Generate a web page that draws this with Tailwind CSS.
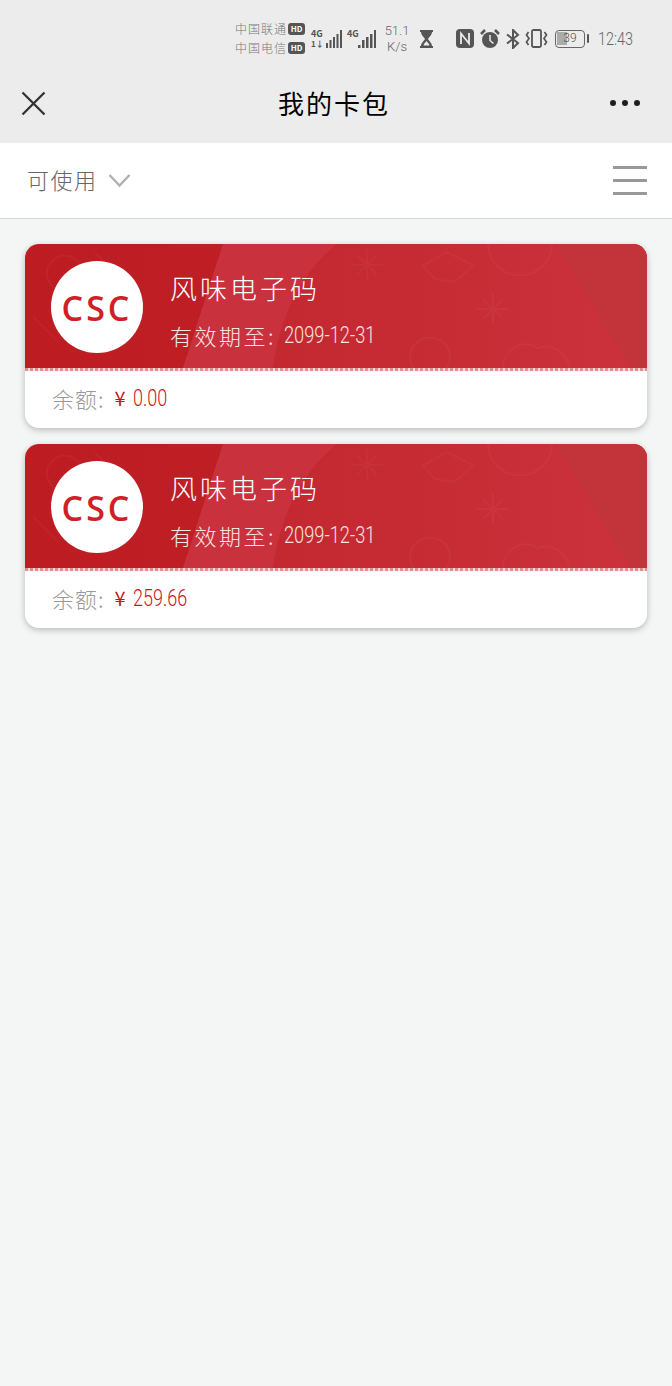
<!DOCTYPE html>
<html lang="zh-CN">
<head>
    <meta charset="UTF-8">
    <meta name="viewport" content="width=device-width, initial-scale=1.0">
    <title>我的卡包</title>
    <script src="https://cdn.jsdelivr.net/npm/@tailwindcss/browser@4"></script>
</head>
<body class="bg-[#f4f6f5] font-['Noto_Sans_CJK_SC','Noto_Sans',sans-serif] h-[1386px] overflow-hidden">
    <!-- shared card artwork -->
    <svg class="absolute w-0 h-0">
        <defs>
            <linearGradient id="left-red" x1="0" x2="1" y1="0" y2="0">
                <stop offset="0" stop-color="#bd1d22"/>
                <stop offset="1" stop-color="#c2242a"/>
            </linearGradient>
            <linearGradient id="mid-red" x1="0" x2="1" y1="0" y2="0">
                <stop offset="0" stop-color="#c2252c"/>
                <stop offset="1" stop-color="#cb323c"/>
            </linearGradient>
        </defs>
        <symbol id="card-art" viewBox="0 0 622 126" preserveAspectRatio="none">
            <rect width="622" height="126" fill="url(#left-red)"/>
            <path d="M198 0H622V126H158Z" fill="url(#mid-red)"/>
            <path d="M198 0H312C275 30 255 75 248 126H158Z" fill="#c9313c"/>
            <path d="M532 0H622V126H605Z" fill="#c3343a"/>
            <g fill="none" stroke="#ffffff" stroke-opacity=".03" stroke-width="2">
                <circle cx="495" cy="0" r="32"/>
                <path d="M458 56l20 20M478 56l-20 20M468 50v32M452 66h32"/>
                <path d="M332 11l20 20M352 11l-20 20M342 5v32M326 21h32"/>
                <path d="M398 22l24-14 26 14-18 16-20-2z"/>
                <circle cx="405" cy="115" r="20"/>
                <path d="M478 126c0-22 24-30 34-20 14-6 30 4 33 20"/>
                <circle cx="40" cy="30" r="18"/>
                <path d="M70 10l30 24-26 30M8 74l24 24"/>
            </g>
        </symbol>
        <symbol id="signal-a" viewBox="0 0 16 18">
            <rect x="0" y="13" width="2" height="5" fill="currentColor"/>
            <rect x="3.500" y="10" width="2" height="8" fill="currentColor"/>
            <rect x="7" y="7" width="2" height="11" fill="currentColor"/>
            <rect x="10.500" y="4" width="2" height="14" fill="currentColor"/>
            <rect x="14" y="0" width="2" height="18" fill="currentColor"/>
        </symbol>
        <symbol id="signal-b" viewBox="0 0 18 18">
            <rect x="0" y="15" width="2.500" height="3" fill="currentColor"/>
            <rect x="4" y="10" width="2.500" height="8" fill="currentColor"/>
            <rect x="8" y="7" width="2.500" height="11" fill="currentColor"/>
            <rect x="12" y="4" width="2.500" height="14" fill="currentColor"/>
            <rect x="16" y="0" width="2" height="18" fill="currentColor"/>
        </symbol>
    </svg>

    <!-- Status bar + title bar -->
    <header class="bg-[#ececec] h-[143px] flex flex-col">
        <div class="h-[72px] flex items-center pl-[235px] pt-[5px] text-[#777777]">
            <div class="flex flex-col gap-[1px] w-[72px] text-[12px] leading-[18px] tracking-[1px] font-light">
                <div class="flex items-center whitespace-nowrap">中国联通<span class="ml-[1px] w-[17px] h-[12px] rounded-[3px] bg-[#555555] text-white text-[8px] leading-[12px] font-bold text-center tracking-normal">HD</span></div>
                <div class="flex items-center whitespace-nowrap">中国电信<span class="ml-[1px] w-[17px] h-[12px] rounded-[3px] bg-[#555555] text-white text-[8px] leading-[12px] font-bold text-center tracking-normal">HD</span></div>
            </div>
            <div class="relative w-[36px] h-[20px] ml-[4px] text-[#555555]">
                <span class="absolute left-0 top-[0px] text-[9px] leading-[10px] font-bold">4G</span>
                <span class="absolute left-0 top-[11px] text-[8px] leading-[8px] font-bold">1↓</span>
                <svg class="absolute left-[15px] top-[1px] w-[16px] h-[18px]"><use href="#signal-a"/></svg>
            </div>
            <div class="relative w-[36px] h-[20px] text-[#555555]">
                <span class="absolute left-0 top-[0px] text-[9px] leading-[10px] font-bold">4G</span>
                <svg class="absolute left-[11px] top-[1px] w-[18px] h-[18px]"><use href="#signal-b"/></svg>
            </div>
            <div class="w-[26px] text-center font-['Roboto',sans-serif] font-light text-[13px] leading-[16px] text-[#666666] ml-[1px]">51.1<br>K/s</div>
            <svg class="ml-[9px] w-[15px] h-[20px] text-[#555555]" viewBox="0 0 15 20" fill="currentColor">
                <path d="M1 1h13v2h-1c0 3-3 5-4 7 1 2 4 4 4 7h1v2H1v-2h1c0-3 3-5 4-7C5 8 2 6 2 3H1z"/>
                <path d="M7.500 12c-1 1.200-2.500 2.500-3 4.500h6c-.5-2-2-3.300-3-4.500z" fill="#ececec"/>
            </svg>
            <!-- NFC -->
            <svg class="ml-[22px] w-[18px] h-[19px] text-[#555555]" viewBox="0 0 18 19">
                <path d="M4 0h10a4 4 0 0 1 4 4v11a4 4 0 0 1-4 4H4a4 4 0 0 1-4-4V4a4 4 0 0 1 4-4z" fill="currentColor"/>
                <path d="M5 15V4.500L13 14.500V4" stroke="#ececec" stroke-width="1.800" fill="none"/>
            </svg>
            <!-- Alarm -->
            <svg class="ml-[6px] w-[20px] h-[20px] text-[#555555]" viewBox="0 0 20 20">
                <circle cx="10" cy="11" r="8" fill="currentColor"/>
                <path d="M1 5l4-4M19 5l-4-4" stroke="currentColor" stroke-width="2.500"/>
                <path d="M10 6v5.500l3.500 3" stroke="#ececec" stroke-width="1.500" fill="none"/>
            </svg>
            <!-- Bluetooth -->
            <svg class="ml-[5px] w-[16px] h-[20px] text-[#555555]" viewBox="0 0 16 20" fill="none" stroke="currentColor" stroke-width="2">
                <path d="M2 5.500L13 14 8 19V1l5 5L2 14.500"/>
            </svg>
            <!-- Vibrate -->
            <svg class="ml-[4px] w-[23px] h-[19px] text-[#555555]" viewBox="0 0 23 19" fill="none" stroke="currentColor" stroke-width="1.700">
                <rect x="7" y="1" width="9" height="17" rx="1.500" stroke-width="1.800"/>
                <path d="M3.500 3L1.500 6 4 9.500 1.500 13 3.500 16M19.500 3l2 3-2.500 3.500 2.500 3.500-2 3"/>
            </svg>
            <!-- Battery -->
            <div class="ml-[7px] relative w-[30px] h-[18px] rounded-[4px] border-[1.500px] border-[#666666] overflow-hidden">
                <div class="mt-[1px] ml-[1px] w-[10px] h-[13px] bg-[#ababab]"></div>
                <span class="absolute inset-0 text-center text-[12px] leading-[15px] font-['Roboto',sans-serif] font-light text-[#555555]">39</span>
            </div>
            <div class="ml-[2px] w-[2px] h-[9px] bg-[#555555] rounded-[1px]"></div>
            <span class="ml-[9px] font-['Roboto',sans-serif] font-light text-[18px] leading-[20px] text-[#666666] inline-block origin-left scale-x-[0.8] whitespace-nowrap">12:43</span>
        </div>
        <div class="relative h-[71px] flex items-center justify-between">
            <svg class="ml-[21px] mb-[8px] w-[25px] h-[25px]" viewBox="0 0 25 25" fill="none" stroke="#333333" stroke-width="2.300">
                <path d="M1.500 1.500L23.500 23.500M23.500 1.500L1.500 23.500"/>
            </svg>
            <h1 class="absolute left-[278px] top-[11px] text-[26px] leading-[40px] font-normal text-black tracking-[2px] whitespace-nowrap">我的卡包</h1>
            <div class="mr-[32px] mb-[9px] flex gap-[6px]">
                <span class="w-[6px] h-[6px] rounded-full bg-[#1f1f1f]"></span>
                <span class="w-[6px] h-[6px] rounded-full bg-[#1f1f1f]"></span>
                <span class="w-[6px] h-[6px] rounded-full bg-[#1f1f1f]"></span>
            </div>
        </div>
    </header>

    <!-- Filter bar -->
    <div class="h-[76px] bg-white border-b border-[#d6d6d6] flex items-center justify-between pl-[27px] pr-[25px]">
        <div class="flex items-center mb-[3px]">
            <span class="text-[22px] leading-[34px] font-light text-[#666666] tracking-[1.500px]">可使用</span>
            <svg class="ml-[10px] mt-[3px] w-[23px] h-[15px]" viewBox="0 0 23 15" fill="none" stroke="#b0b0b0" stroke-width="2.400">
                <path d="M1.500 2L11.500 12.500L21.500 2"/>
            </svg>
        </div>
        <div class="flex flex-col gap-[10.500px]">
            <div class="w-[34px] h-[2.500px] bg-[#999999]"></div>
            <div class="w-[34px] h-[2.500px] bg-[#999999]"></div>
            <div class="w-[34px] h-[2.500px] bg-[#999999]"></div>
        </div>
    </div>

    <!-- Cards -->
    <main class="pt-[25px] px-[25px] flex flex-col gap-[16px]">
        <div class="w-[622px] h-[184px] rounded-[14px] bg-white shadow-[0_2px_6px_rgba(0,0,0,0.25)] overflow-hidden">
            <div class="relative h-[124px]">
                <svg class="absolute inset-0 w-full h-full"><use href="#card-art"/></svg>
                <div class="relative h-full flex">
                    <div class="ml-[26px] mt-[17px] w-[92px] h-[92px] rounded-full bg-white flex items-center justify-center pt-[3px] text-[34px] font-['Open_Sans',sans-serif] font-semibold text-[#cf2027] tracking-[3px]">CSC</div>
                    <div class="ml-[27px] text-white">
                        <div class="mt-[23px] text-[27px] leading-[42px] font-light tracking-[3px] whitespace-nowrap">风味电子码</div>
                        <div class="mt-[9px] flex items-center h-[34px] text-[#f9e3e3] whitespace-nowrap">
                            <span class="text-[22px] font-light tracking-[2.500px]">有效期至:</span>
                            <span class="ml-[8px] font-['Roboto',sans-serif] font-light text-[24px] inline-block origin-left scale-x-[0.76]">2099-12-31</span>
                        </div>
                    </div>
                </div>
            </div>
            <div class="h-[3px] bg-[repeating-linear-gradient(90deg,#e58a8e_0,#e58a8e_3px,#f9dcdc_3px,#f9dcdc_5px)]"></div>
            <div class="h-[54px] pl-[27px] flex items-center whitespace-nowrap">
                <span class="text-[22px] font-light text-[#999999] tracking-[1px]">余额:</span>
                <span class="ml-[10px] text-[#c8161d] text-[20px] font-normal">¥</span>
                <span class="ml-[7px] font-['Roboto',sans-serif] font-light text-[#c8161d] text-[24px] inline-block origin-left scale-x-[0.75]">0.00</span>
            </div>
        </div>
        <div class="w-[622px] h-[184px] rounded-[14px] bg-white shadow-[0_2px_6px_rgba(0,0,0,0.25)] overflow-hidden">
            <div class="relative h-[124px]">
                <svg class="absolute inset-0 w-full h-full"><use href="#card-art"/></svg>
                <div class="relative h-full flex">
                    <div class="ml-[26px] mt-[17px] w-[92px] h-[92px] rounded-full bg-white flex items-center justify-center pt-[3px] text-[34px] font-['Open_Sans',sans-serif] font-semibold text-[#cf2027] tracking-[3px]">CSC</div>
                    <div class="ml-[27px] text-white">
                        <div class="mt-[23px] text-[27px] leading-[42px] font-light tracking-[3px] whitespace-nowrap">风味电子码</div>
                        <div class="mt-[9px] flex items-center h-[34px] text-[#f9e3e3] whitespace-nowrap">
                            <span class="text-[22px] font-light tracking-[2.500px]">有效期至:</span>
                            <span class="ml-[8px] font-['Roboto',sans-serif] font-light text-[24px] inline-block origin-left scale-x-[0.76]">2099-12-31</span>
                        </div>
                    </div>
                </div>
            </div>
            <div class="h-[3px] bg-[repeating-linear-gradient(90deg,#e58a8e_0,#e58a8e_3px,#f9dcdc_3px,#f9dcdc_5px)]"></div>
            <div class="h-[54px] pl-[27px] flex items-center whitespace-nowrap">
                <span class="text-[22px] font-light text-[#999999] tracking-[1px]">余额:</span>
                <span class="ml-[10px] text-[#c8161d] text-[20px] font-normal">¥</span>
                <span class="ml-[7px] font-['Roboto',sans-serif] font-light text-[#c8161d] text-[24px] inline-block origin-left scale-x-[0.75]">259.66</span>
            </div>
        </div>
    </main>
</body>
</html>
